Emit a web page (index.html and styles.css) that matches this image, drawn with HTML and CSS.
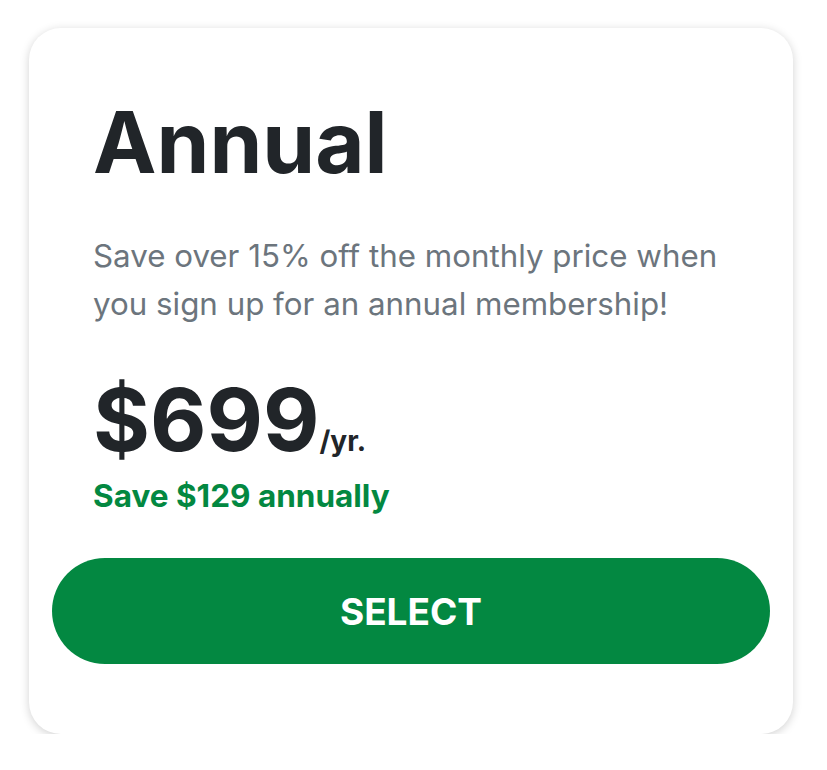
FILE: index.html
```html
<!DOCTYPE html>
<html lang="en">

<head>
    <meta charset="UTF-8">
    <meta name="viewport" content="width=device-width, initial-scale=1.0">
    <title>Annual Plan</title>
    <link rel="stylesheet" href="styles.css">
</head>

<body>
    <div class="plan-card">
        <div class="plan-body">
            <h1 class="plan-title">Annual</h1>
            <p class="plan-desc">Save over 15% off the monthly price when you sign up for an annual membership!</p>
            <div class="plan-price">$699<span class="plan-period">/yr.</span></div>
            <div class="plan-savings">Save $129 annually</div>
        </div>
        <button class="plan-select">SELECT</button>
    </div>
</body>

</html>
```

FILE: styles.css
```css
body {
    margin: 0;
    background-color: #fff;
    font-family: Inter, "Noto Sans", sans-serif;
    color: #212529;
}

.plan-card {
    box-sizing: border-box;
    width: 764px;
    height: 706px;
    margin: 28px 0 0 29px;
    padding: 62px 23px 0;
    background-color: #fff;
    border-radius: 32px;
    box-shadow: 0 2px 10px rgba(0, 0, 0, 0.18);
}

.plan-body {
    padding: 0 41px;
}

.plan-title {
    margin: 0;
    font-size: 85px;
    font-weight: 700;
    line-height: 105px;
    color: #212529;
}

.plan-desc {
    margin: 37px 0 0;
    font-size: 31.3px;
    line-height: 48px;
    color: #6c757d;
}

.plan-price {
    margin-top: 47px;
    font-size: 87px;
    font-weight: 700;
    line-height: 90px;
    color: #212529;
}

.plan-period {
    font-size: 28px;
    line-height: 1;
}

.plan-savings {
    margin-top: 5px;
    font-size: 31.5px;
    font-weight: 700;
    line-height: 51px;
    color: #038841;
}

.plan-select {
    display: block;
    width: 100%;
    height: 106px;
    margin-top: 37px;
    border: none;
    border-radius: 53px;
    background-color: #038841;
    color: #fff;
    font-family: Inter, "Noto Sans", sans-serif;
    font-size: 37px;
    font-weight: 700;
    cursor: pointer;
}
```
